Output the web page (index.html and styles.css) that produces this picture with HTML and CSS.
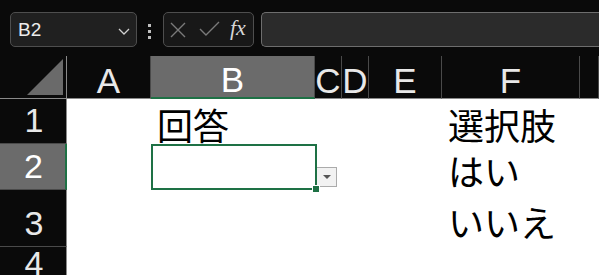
FILE: index.html
```html
<!DOCTYPE html>
<html lang="ja">
<head>
    <meta charset="UTF-8">
    <title>Book1 - Excel</title>
    <link rel="stylesheet" href="styles.css">
</head>
<body>
    <div class="toolbar">
        <div class="name-box">
            <span>B2</span>
            <svg class="chevron" width="12" height="7" viewBox="0 0 12 7">
                <polyline points="1,1 6,6 11,1" fill="none" stroke="#d0d0d0" stroke-width="1.3"/>
            </svg>
        </div>
        <div class="grip"><i></i><i></i><i></i></div>
        <div class="fx-box">
            <svg class="icon-cancel" width="16" height="16" viewBox="0 0 16 16">
                <path d="M1 1 L15 15 M15 1 L1 15" stroke="#7a7a7a" stroke-width="1.4"/>
            </svg>
            <svg class="icon-enter" width="21" height="15" viewBox="0 0 21 15">
                <polyline points="1,8 7,14 20,1" fill="none" stroke="#7a7a7a" stroke-width="1.4"/>
            </svg>
            <span class="fx">fx</span>
        </div>
        <div class="formula-bar"></div>
    </div>

    <div class="sheet">
        <div class="corner"><div class="corner-mark"></div></div>
        <div class="col-head">A</div>
        <div class="col-head active">B</div>
        <div class="col-head">C</div>
        <div class="col-head">D</div>
        <div class="col-head">E</div>
        <div class="col-head">F</div>
        <div class="col-head"></div>

        <div class="row-head">1</div>
        <div class="cell"></div>
        <div class="cell">回答</div>
        <div class="cell"></div>
        <div class="cell"></div>
        <div class="cell"></div>
        <div class="cell">選択肢</div>
        <div class="cell"></div>

        <div class="row-head active">2</div>
        <div class="cell"></div>
        <div class="cell selected">
            <div class="fill-handle"></div>
            <div class="list-button"><span></span></div>
        </div>
        <div class="cell"></div>
        <div class="cell"></div>
        <div class="cell"></div>
        <div class="cell">はい</div>
        <div class="cell"></div>

        <div class="row-head">3</div>
        <div class="cell"></div>
        <div class="cell"></div>
        <div class="cell"></div>
        <div class="cell"></div>
        <div class="cell"></div>
        <div class="cell">いいえ</div>
        <div class="cell"></div>

        <div class="row-head">4</div>
        <div class="cell"></div>
        <div class="cell"></div>
        <div class="cell"></div>
        <div class="cell"></div>
        <div class="cell"></div>
        <div class="cell"></div>
        <div class="cell"></div>
    </div>
</body>
</html>
```

FILE: styles.css
```css
body {
    margin: 0;
    background-color: #0a0a0a;
    font-family: "Liberation Sans", Arial, sans-serif;
    overflow: hidden;
    height: 275px;
}
.toolbar {
    display: flex;
    align-items: flex-start;
    height: 56px;
    padding: 12px 0 0 10px;
    box-sizing: border-box;
}
.name-box {
    position: relative;
    width: 127px;
    height: 35px;
    box-sizing: border-box;
    border: 1px solid #4e4e4e;
    border-radius: 5px;
    background-color: #202020;
    color: #ececec;
    font-size: 19px;
    line-height: 33px;
    padding-left: 7px;
}
.chevron {
    position: absolute;
    left: 107px;
    top: 15px;
}
.grip {
    display: flex;
    flex-direction: column;
    gap: 3px;
    margin: 12px 12px 0 11px;
}
.grip i {
    display: block;
    width: 3px;
    height: 3px;
    background-color: #c0c0c0;
}
.fx-box {
    display: flex;
    align-items: center;
    width: 91px;
    height: 35px;
    box-sizing: border-box;
    border: 1px solid #4e4e4e;
    border-radius: 5px;
    background-color: #181818;
    padding-left: 6px;
}
.icon-cancel {
    margin-right: 13px;
}
.icon-enter {
    margin-right: 10px;
    margin-top: -2px;
}
.fx {
    font-family: "Liberation Serif", serif;
    font-style: italic;
    font-size: 22px;
    color: #d6d6d6;
    margin-top: -3px;
}
.formula-bar {
    flex: 1;
    height: 35px;
    margin-left: 7px;
    box-sizing: border-box;
    border: 1px solid #6e6e6e;
    border-right: none;
    border-radius: 5px 0 0 5px;
    background-color: #2b2b2b;
}
.sheet {
    display: grid;
    grid-template-columns: 67px 84px 164px 27px 27px 73px 138px 1fr;
    grid-template-rows: 43px 45px 46px 57px 40px;
}
.corner {
    display: flex;
    justify-content: flex-end;
    align-items: flex-end;
    padding: 0 3px 3px 0;
    border-right: 1px solid #8a8a8a;
    border-bottom: 1px solid #8a8a8a;
}
.corner-mark {
    width: 36px;
    height: 36px;
    background-color: #6a6a6a;
    clip-path: polygon(100% 0, 100% 100%, 0 100%);
}
.col-head {
    display: flex;
    justify-content: center;
    align-items: center;
    padding-top: 6px;
    box-sizing: border-box;
    border-right: 1px solid #4a4a4a;
    border-bottom: 1px solid #8a8a8a;
    color: #e8e8e8;
    font-size: 35px;
    line-height: 1;
    overflow: visible;
    white-space: nowrap;
}
.col-head.active {
    background-color: #6b6b6b;
    color: #ffffff;
    border-bottom: 2px solid #1e7145;
}
.row-head {
    display: flex;
    justify-content: center;
    align-items: flex-end;
    padding-bottom: 6px;
    padding-left: 2px;
    box-sizing: border-box;
    border-right: 1px solid #8a8a8a;
    border-bottom: 1px solid #4a4a4a;
    color: #e8e8e8;
    font-size: 34px;
    line-height: 1;
}
.row-head.active {
    background-color: #6b6b6b;
    color: #ffffff;
    border-right: 2px solid #1e7145;
}
.cell {
    display: flex;
    align-items: center;
    padding: 5px 0 0 6px;
    box-sizing: border-box;
    background-color: #ffffff;
    color: #000000;
    font-family: "Noto Sans CJK JP", sans-serif;
    font-size: 36px;
    line-height: 1;
    white-space: nowrap;
}
.cell.selected {
    position: relative;
    z-index: 1;
}
.cell.selected::after {
    content: "";
    position: absolute;
    left: 0;
    top: 0;
    right: -2px;
    bottom: 0;
    border: 2px solid #1e7145;
}
.fill-handle {
    position: absolute;
    right: -5px;
    bottom: -3px;
    width: 6px;
    height: 6px;
    background-color: #1e7145;
    border: 1px solid #ffffff;
    z-index: 2;
}
.list-button {
    position: absolute;
    left: 165px;
    top: 23px;
    width: 21px;
    height: 20px;
    box-sizing: border-box;
    border: 1px solid #ababab;
    background-color: #f2f2f2;
    display: flex;
    justify-content: center;
    align-items: center;
}
.list-button span {
    width: 0;
    height: 0;
    border-left: 4px solid transparent;
    border-right: 4px solid transparent;
    border-top: 4px solid #555555;
}
```
